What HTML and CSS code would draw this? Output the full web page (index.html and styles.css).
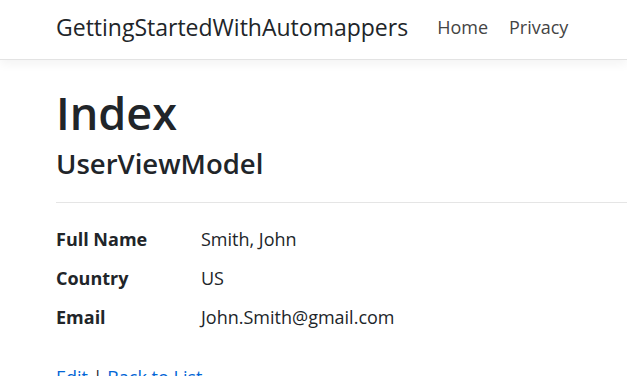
FILE: index.html
```html
<!DOCTYPE html>
<html lang="en">
<head>
    <meta charset="UTF-8">
    <meta name="viewport" content="width=device-width, initial-scale=1.0">
    <title>Index - GettingStartedWithAutomappers</title>
    <link rel="stylesheet" href="styles.css">
</head>
<body>
    <header class="navbar">
        <div class="container nav-inner">
            <a class="brand" href="#">GettingStartedWithAutomappers</a>
            <nav class="nav-links">
                <a href="#">Home</a>
                <a href="#">Privacy</a>
            </nav>
        </div>
    </header>
    <main class="container content">
        <h1 class="title">Index</h1>
        <div class="details">
            <h4 class="subtitle">UserViewModel</h4>
            <hr>
            <dl class="fields">
                <dt>Full Name</dt>
                <dd>Smith, John</dd>
                <dt>Country</dt>
                <dd>US</dd>
                <dt>Email</dt>
                <dd>John.Smith@gmail.com</dd>
            </dl>
        </div>
        <div class="actions">
            <a href="#">Edit</a> | <a href="#">Back to List</a>
        </div>
    </main>
</body>
</html>
```

FILE: styles.css
```css
body {
    margin: 0;
    font-family: 'Open Sans', 'Noto Sans', sans-serif;
    color: #212529;
    background: #fff;
    overflow: hidden;
}
.container {
    padding-left: 56px;
    width: 800px;
}
.navbar {
    height: 59px;
    border-bottom: 1px solid #e3e3e3;
    box-shadow: 0 4px 10px rgba(0, 0, 0, 0.05);
}
.nav-inner {
    display: flex;
    align-items: center;
    height: 100%;
    padding-bottom: 6px;
    box-sizing: border-box;
}
.brand {
    font-size: 23px;
    color: #212529;
    text-decoration: none;
    margin-right: 29px;
}
.nav-links {
    display: flex;
    gap: 21px;
}
.nav-links a {
    font-size: 18px;
    color: #444;
    text-decoration: none;
}
.content {
    padding-top: 26px;
}
.title {
    font-size: 45px;
    font-weight: 600;
    line-height: 1.2;
    margin: 0 0 7px;
}
.subtitle {
    font-size: 27.5px;
    font-weight: 600;
    line-height: 1.2;
    margin: 0;
}
.details hr {
    border: 0;
    border-top: 1px solid #e5e5e5;
    margin: 22px 0 23px;
}
.fields {
    display: grid;
    grid-template-columns: 145px 1fr;
    row-gap: 12px;
    margin: 0;
    font-size: 18px;
    line-height: 27px;
}
.fields dt {
    font-weight: 700;
}
.fields dd {
    margin: 0;
}
.actions {
    margin-top: 34px;
    font-size: 18px;
}
.actions a {
    color: #0366d6;
    text-decoration: none;
}
```
